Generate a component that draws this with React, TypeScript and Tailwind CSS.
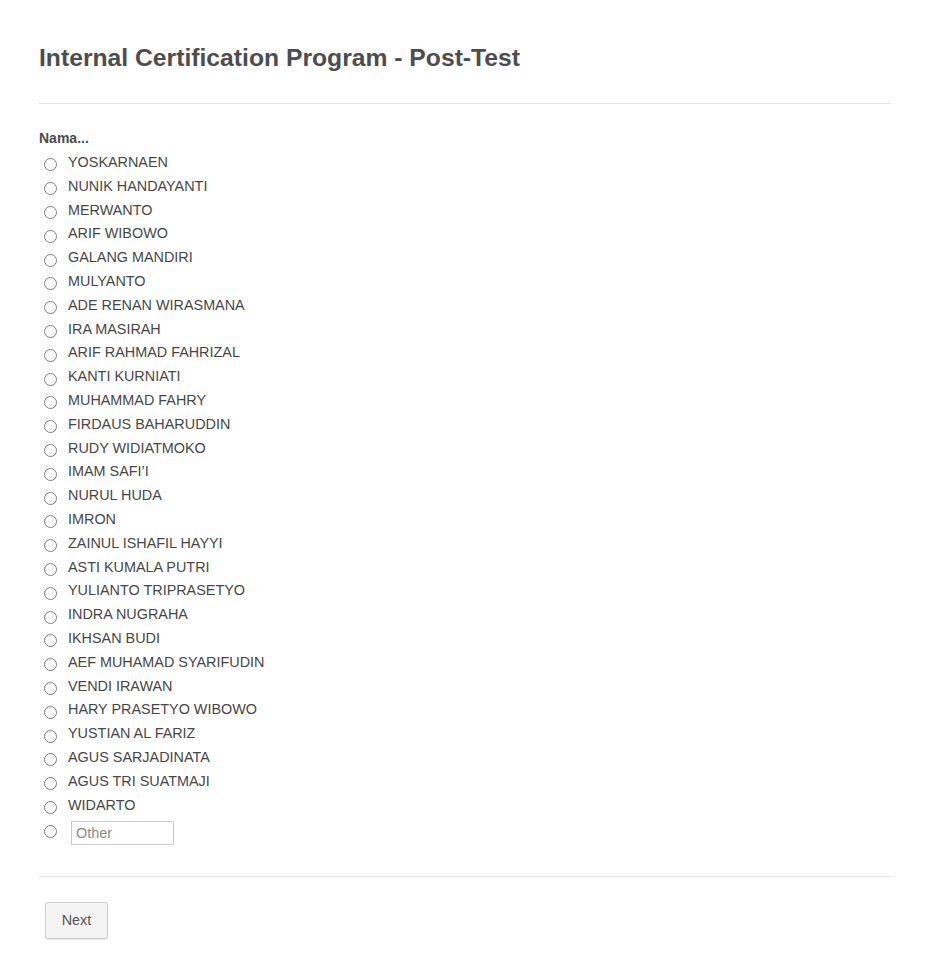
const names = [
  'YOSKARNAEN',
  'NUNIK HANDAYANTI',
  'MERWANTO',
  'ARIF WIBOWO',
  'GALANG MANDIRI',
  'MULYANTO',
  'ADE RENAN WIRASMANA',
  'IRA MASIRAH',
  'ARIF RAHMAD FAHRIZAL',
  'KANTI KURNIATI',
  'MUHAMMAD FAHRY',
  'FIRDAUS BAHARUDDIN',
  'RUDY WIDIATMOKO',
  'IMAM SAFI’I',
  'NURUL HUDA',
  'IMRON',
  'ZAINUL ISHAFIL HAYYI',
  'ASTI KUMALA PUTRI',
  'YULIANTO TRIPRASETYO',
  'INDRA NUGRAHA',
  'IKHSAN BUDI',
  'AEF MUHAMAD SYARIFUDIN',
  'VENDI IRAWAN',
  'HARY PRASETYO WIBOWO',
  'YUSTIAN AL FARIZ',
  'AGUS SARJADINATA',
  'AGUS TRI SUATMAJI',
  'WIDARTO',
];

function Radio() {
  return (
    <span className="inline-block w-[13px] h-[13px] rounded-full border border-[#7f7f7f] bg-white shrink-0" />
  );
}

export default function App() {
  return (
    <div className="min-h-screen bg-white text-[#474747]" style={{ fontFamily: "'Liberation Sans', Arial, sans-serif" }}>
      <div className="mx-[39px] pt-[42px] pb-[26px]">
        <h1 className="text-[24.7px] leading-[31px] font-bold text-[#4d4d4d]">Internal Certification Program - Post-Test</h1>
        <hr className="mt-[30px] border-t border-[#e3e3e3]" />

        <div className="mt-[25px]">
          <div className="text-[14px] leading-[18px] font-bold text-[#4d4d4d]">Nama...</div>
          <div className="mt-[4px] flex flex-col">
            {names.map((n) => (
              <label key={n} className="h-[23.8px] flex items-center text-[14.4px]">
                <span className="ml-[5px] mt-[4px] mr-[11px] flex"><Radio /></span>
                <span>{n}</span>
              </label>
            ))}
            <div className="flex items-start mt-[4px]">
              <span className="ml-[5px] mt-[4px] mr-[14px] flex"><Radio /></span>
              <input
                placeholder="Other"
                className="w-[103px] h-[24px] border border-[#cccccc] px-[4px] text-[14.4px] placeholder:text-[#8a8a8a] outline-none"
              />
            </div>
          </div>
        </div>

        <hr className="mt-[31px] border-t border-[#e3e3e3]" />
        <button className="mt-[25px] ml-[6px] w-[63px] h-[37px] rounded-[3px] border border-[#cccccc] bg-[#f4f4f4] text-[14.4px] text-[#555] shadow-[0_1px_1px_rgba(0,0,0,0.1)]">
          Next
        </button>
      </div>
    </div>
  );
}
